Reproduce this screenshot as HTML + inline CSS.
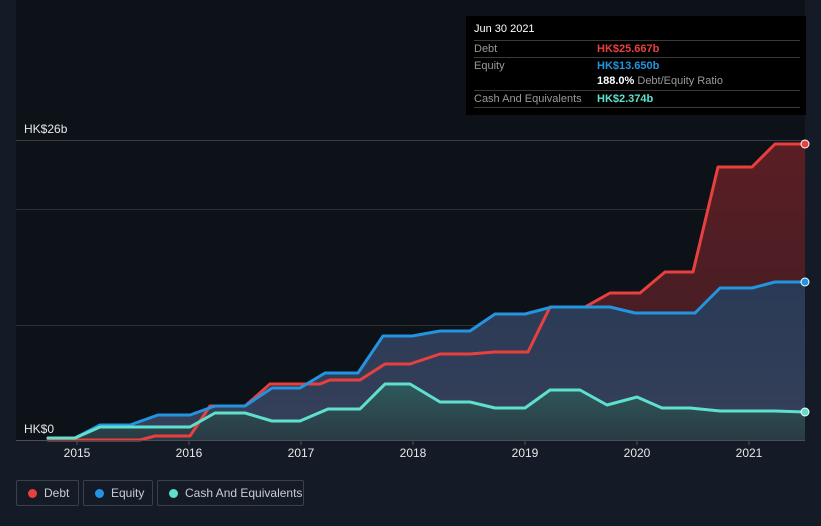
<!DOCTYPE html>
<html><head><meta charset="utf-8"><style>
body{margin:0;width:821px;height:526px;background:#151b26;font-family:"Liberation Sans",sans-serif;overflow:hidden;position:relative}
.tt{position:absolute;left:466px;top:16px;width:340px;height:99px;background:#000;color:#fff;font-size:11px}
.tt .r{position:absolute;left:8px;right:6px;height:16px;line-height:16px;border-top:1px solid #3a3a3a;color:#9a9a9a}
.tt .v{position:absolute;left:123px;font-weight:bold}
.leg{position:absolute;top:480px;height:26px;border:1px solid #3a404a;border-radius:2px;color:#c8ccd2;font-size:12px;line-height:25px;box-sizing:border-box;padding-left:27px;white-space:nowrap}
.leg i{position:absolute;left:11px;top:8px;width:9px;height:9px;border-radius:50%}
.ax{position:absolute;top:446px;color:#e6e8ea;font-size:12px;width:40px;margin-left:-20px;text-align:center}
</style></head><body>
<svg width="821" height="526" style="position:absolute;left:0;top:0">
<defs>
<linearGradient id="gd" x1="0" y1="0" x2="0" y2="1"><stop offset="0" stop-color="#5a1e24"/><stop offset="1" stop-color="#3a1e24"/></linearGradient>
<linearGradient id="ge" x1="0" y1="0" x2="0" y2="1"><stop offset="0" stop-color="#2a3a55"/><stop offset="1" stop-color="#36405a"/></linearGradient>
<linearGradient id="gc" x1="0" y1="0" x2="0" y2="1"><stop offset="0" stop-color="#2e5a5c"/><stop offset="1" stop-color="#2a3a44"/></linearGradient>
</defs>
<rect x="16" y="0" width="789" height="440" fill="#0d1118"/>
<line x1="16" y1="140.5" x2="805" y2="140.5" stroke="#3a3e46"/>
<line x1="16" y1="209.5" x2="805" y2="209.5" stroke="#2a2e36"/>
<line x1="16" y1="325.5" x2="805" y2="325.5" stroke="#2a2e36"/>
<polygon fill="url(#gd)" points="48,440 140,440 155,436 190,436 210,406 245,406 270,384 320,384 330,380 360,380 385,364 410,364 440,354 470,354 495,352 528,352 550,307 585,307 610,293 640,293 665,272 693,272 718,167 752,167 775,144 805,144 805,440"/>
<polygon fill="url(#ge)" points="48,438 75,438 100,425 130,425 158,415 190,415 215,406 245,406 272,388 300,388 325,373 358,373 383,336 412,336 440,331 470,331 495,314 525,314 552,307 610,307 635,313 695,313 720,288 752,288 775,282 805,282 805,440 48,440"/>
<polygon fill="url(#gc)" points="48,438 75,438 100,427 190,427 215,413 245,413 272,421 300,421 328,409 360,409 385,384 410,384 440,402 470,402 495,408 525,408 550,390 580,390 607,405 637,397 662,408 690,408 720,411 775,411 805,412 805,440 48,440"/>
<g fill="none" stroke-width="3" stroke-linejoin="round" stroke-linecap="round">
<polyline stroke="#e8403f" points="48,440 140,440 155,436 190,436 210,406 245,406 270,384 320,384 330,380 360,380 385,364 410,364 440,354 470,354 495,352 528,352 550,307 585,307 610,293 640,293 665,272 693,272 718,167 752,167 775,144 805,144"/>
<polyline stroke="#2394df" points="48,438 75,438 100,425 130,425 158,415 190,415 215,406 245,406 272,388 300,388 325,373 358,373 383,336 412,336 440,331 470,331 495,314 525,314 552,307 610,307 635,313 695,313 720,288 752,288 775,282 805,282"/>
<polyline stroke="#5ee0cc" points="48,438 75,438 100,427 190,427 215,413 245,413 272,421 300,421 328,409 360,409 385,384 410,384 440,402 470,402 495,408 525,408 550,390 580,390 607,405 637,397 662,408 690,408 720,411 775,411 805,412"/>
</g>
<circle cx="805" cy="144" r="4" fill="#e8403f" stroke="#fff" stroke-width="1"/>
<circle cx="805" cy="282" r="4" fill="#2394df" stroke="#fff" stroke-width="1"/>
<circle cx="805" cy="412" r="4" fill="#5ee0cc" stroke="#fff" stroke-width="1"/>
<line x1="16" y1="440.5" x2="805" y2="440.5" stroke="#4a4e56"/>
<g stroke="#4a4e56"><line x1="77" y1="440" x2="77" y2="445"/><line x1="189" y1="440" x2="189" y2="445"/><line x1="301" y1="440" x2="301" y2="445"/><line x1="413" y1="440" x2="413" y2="445"/><line x1="525" y1="440" x2="525" y2="445"/><line x1="637" y1="440" x2="637" y2="445"/><line x1="749" y1="440" x2="749" y2="445"/></g>
</svg>
<div style="position:absolute;left:24px;top:122px;color:#e6e8ea;font-size:12px">HK$26b</div>
<div style="position:absolute;left:24px;top:422px;color:#e6e8ea;font-size:12px">HK$0</div>
<div class="ax" style="left:77px">2015</div><div class="ax" style="left:189px">2016</div><div class="ax" style="left:301px">2017</div><div class="ax" style="left:413px">2018</div><div class="ax" style="left:525px">2019</div><div class="ax" style="left:637px">2020</div><div class="ax" style="left:749px">2021</div>
<div class="tt">
<div style="position:absolute;left:8px;top:7px">Jun 30 2021</div>
<div class="r" style="top:24px">Debt<span class="v" style="color:#e8403f">HK$25.667b</span></div>
<div class="r" style="top:41px">Equity<span class="v" style="color:#2394df">HK$13.650b</span></div>
<div class="r" style="top:57px;border-top:none"><span class="v" style="color:#fff">188.0% <span style="color:#9a9a9a;font-weight:normal">Debt/Equity Ratio</span></span></div>
<div class="r" style="top:74px;border-bottom:1px solid #3a3a3a">Cash And Equivalents<span class="v" style="color:#5ee0cc">HK$2.374b</span></div>
</div>
<div class="leg" style="left:16px;width:63px"><i style="background:#e8403f"></i>Debt</div>
<div class="leg" style="left:83px;width:70px"><i style="background:#2394df"></i>Equity</div>
<div class="leg" style="left:157px;width:147px"><i style="background:#5ee0cc"></i>Cash And Equivalents</div>
</body></html>
